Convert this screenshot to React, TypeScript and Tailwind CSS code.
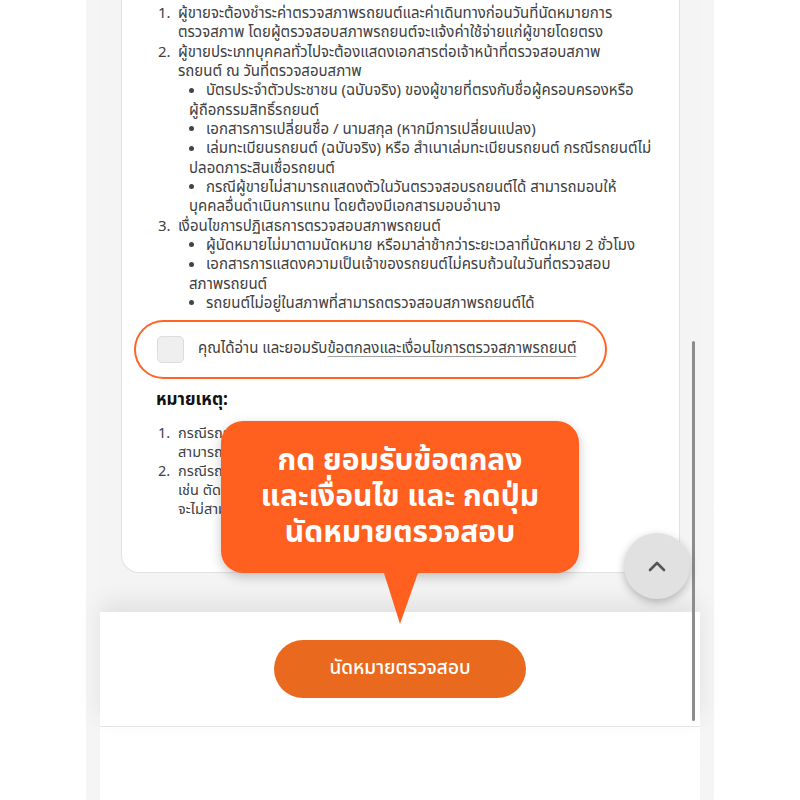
import React from "react";

const Bullet = ({ children }: { children: React.ReactNode }) => (
  <div className="ml-[11px] whitespace-nowrap">
    <span className="inline-block w-[5px] h-[5px] rounded-full bg-[#444] align-middle mr-[12px] -mt-[2px]" />
    {children}
  </div>
);

const Item = ({ n, children }: { n: string; children: React.ReactNode }) => (
  <li className="flex">
    <span className="w-5 shrink-0">{n}</span>
    <div className="whitespace-nowrap">{children}</div>
  </li>
);

export default function App() {
  return (
    <div className="relative h-[800px] w-full overflow-hidden bg-white flex justify-center font-['Noto_Sans_Thai','Noto_Sans','Liberation_Sans',sans-serif]">
      <div className="w-[628px] shrink-0 h-[830px] rounded-b-[36px] bg-gradient-to-r from-[#f5f5f5] via-[#ececec] to-[#f5f5f5] px-[14px]">
        <div className="h-full flex flex-col bg-white">
          {/* scrolling content */}
          <div className="h-[612px] shrink-0 bg-[#f4f4f4] pl-[21px] pr-[20px] pb-[39px] flex flex-col">
            <div className="flex-1 bg-white border border-t-0 border-[#e2e2e2] rounded-b-[18px] px-3 pt-[4px] text-[#404040] text-[15px] leading-[19.35px]">
              <ol className="ml-6">
                <Item n="1.">
                  ผู้ขายจะต้องชำระค่าตรวจสภาพรถยนต์และค่าเดินทางก่อนวันที่นัดหมายการ
                  <br />
                  ตรวจสภาพ โดยผู้ตรวจสอบสภาพรถยนต์จะแจ้งค่าใช้จ่ายแก่ผู้ขายโดยตรง
                </Item>
                <Item n="2.">
                  ผู้ขายประเภทบุคคลทั่วไปจะต้องแสดงเอกสารต่อเจ้าหน้าที่ตรวจสอบสภาพ
                  <br />
                  รถยนต์ ณ วันที่ตรวจสอบสภาพ
                  <Bullet>
                    บัตรประจำตัวประชาชน (ฉบับจริง) ของผู้ขายที่ตรงกับชื่อผู้ครอบครองหรือ
                    <br />
                    ผู้ถือกรรมสิทธิ์รถยนต์
                  </Bullet>
                  <Bullet>เอกสารการเปลี่ยนชื่อ / นามสกุล (หากมีการเปลี่ยนแปลง)</Bullet>
                  <Bullet>
                    เล่มทะเบียนรถยนต์ (ฉบับจริง) หรือ สำเนาเล่มทะเบียนรถยนต์ กรณีรถยนต์ไม่
                    <br />
                    ปลอดภาระสินเชื่อรถยนต์
                  </Bullet>
                  <Bullet>
                    กรณีผู้ขายไม่สามารถแสดงตัวในวันตรวจสอบรถยนต์ได้ สามารถมอบให้
                    <br />
                    บุคคลอื่นดำเนินการแทน โดยต้องมีเอกสารมอบอำนาจ
                  </Bullet>
                </Item>
                <Item n="3.">
                  เงื่อนไขการปฏิเสธการตรวจสอบสภาพรถยนต์
                  <Bullet>ผู้นัดหมายไม่มาตามนัดหมาย หรือมาล่าช้ากว่าระยะเวลาที่นัดหมาย 2 ชั่วโมง</Bullet>
                  <Bullet>
                    เอกสารการแสดงความเป็นเจ้าของรถยนต์ไม่ครบถ้วนในวันที่ตรวจสอบ
                    <br />
                    สภาพรถยนต์
                  </Bullet>
                  <Bullet>รถยนต์ไม่อยู่ในสภาพที่สามารถตรวจสอบสภาพรถยนต์ได้</Bullet>
                </Item>
              </ol>

              {/* accept checkbox */}
              <label className="mt-[6px] w-[473px] h-[59px] border-2 border-[#ff6424] rounded-[30px] flex items-center pl-[21px] gap-[14px] whitespace-nowrap">
                <span className="w-[27px] h-[27px] shrink-0 rounded-[5px] bg-[#efefef] border border-[#dcdcdc]" />
                <span>
                  คุณได้อ่าน และยอมรับ
                  <span className="underline decoration-[#a0a0a0] underline-offset-[3px]">
                    ข้อตกลงและเงื่อนไขการตรวจสภาพรถยนต์
                  </span>
                </span>
              </label>

              <h3 className="mt-[9px] ml-[22px] text-[17px] leading-6 font-bold text-[#111]">หมายเหตุ:</h3>
              <ol className="ml-6 mt-[13px] text-[14.5px] leading-[19px]">
                <Item n="1.">
                  กรณีรถยนต์มีการดัดแปลงสภาพ หรือติดตั้งอุปกรณ์เพิ่มเติม อาจจะไม่
                  <br />
                  สามารถประเมินราคาได้ตามมาตรฐาน
                </Item>
                <Item n="2.">
                  กรณีรถยนต์เคยประสบอุบัติเหตุ หรือมีการเปลี่ยนชิ้นส่วนสำคัญ
                  <br />
                  เช่น ตัดต่อ เปลี่ยนหลังคา หรือคานรถ (ได้เกรดรถ 1-2 ดาว)
                  <br />
                  จะไม่สามารถรับซื้อได้
                </Item>
              </ol>
            </div>
          </div>

          {/* footer */}
          <div className="relative h-[115px] shrink-0 bg-white border-b border-[#e4e4e4] shadow-[0_-10px_22px_rgba(0,0,0,0.08)] flex items-center justify-center">
            <button className="w-[252px] h-[58px] rounded-full bg-[#e96a1f] text-white text-[19px] font-medium">
              นัดหมายตรวจสอบ
            </button>
          </div>
          <div className="flex-1 bg-white" />
        </div>
      </div>

      {/* scrollbar */}
      <div className="absolute left-[692px] top-[341px] w-[3px] h-[380px] rounded-full bg-[#8c8c8c]" />

      {/* scroll to top */}
      <button className="absolute left-[624px] top-[533px] w-[66px] h-[66px] rounded-full bg-[#e1e1e1] shadow-[0_3px_8px_rgba(0,0,0,0.25)] flex items-center justify-center">
        <svg width="18" height="12" viewBox="0 0 18 12" fill="none">
          <path d="M2 10 L9 3 L16 10" stroke="#555" strokeWidth="2.6" strokeLinecap="round" strokeLinejoin="round" />
        </svg>
      </button>

      {/* tooltip callout */}
      <div className="absolute left-[221px] top-[421px] w-[358px] h-[152px] rounded-[22px] bg-[#ff5f1f] shadow-[0_4px_12px_rgba(0,0,0,0.22)] flex flex-col items-center justify-center text-white text-[30px] leading-[36px] font-bold">
        <div>กด ยอมรับข้อตกลง</div>
        <div>และเงื่อนไข และ กดปุ่ม</div>
        <div>นัดหมายตรวจสอบ</div>
      </div>
      <svg className="absolute left-[380px] top-[570px]" width="42" height="56" viewBox="0 0 42 56">
        <polygon points="3,0 39,0 20,54" fill="#ff5f1f" />
      </svg>
    </div>
  );
}
